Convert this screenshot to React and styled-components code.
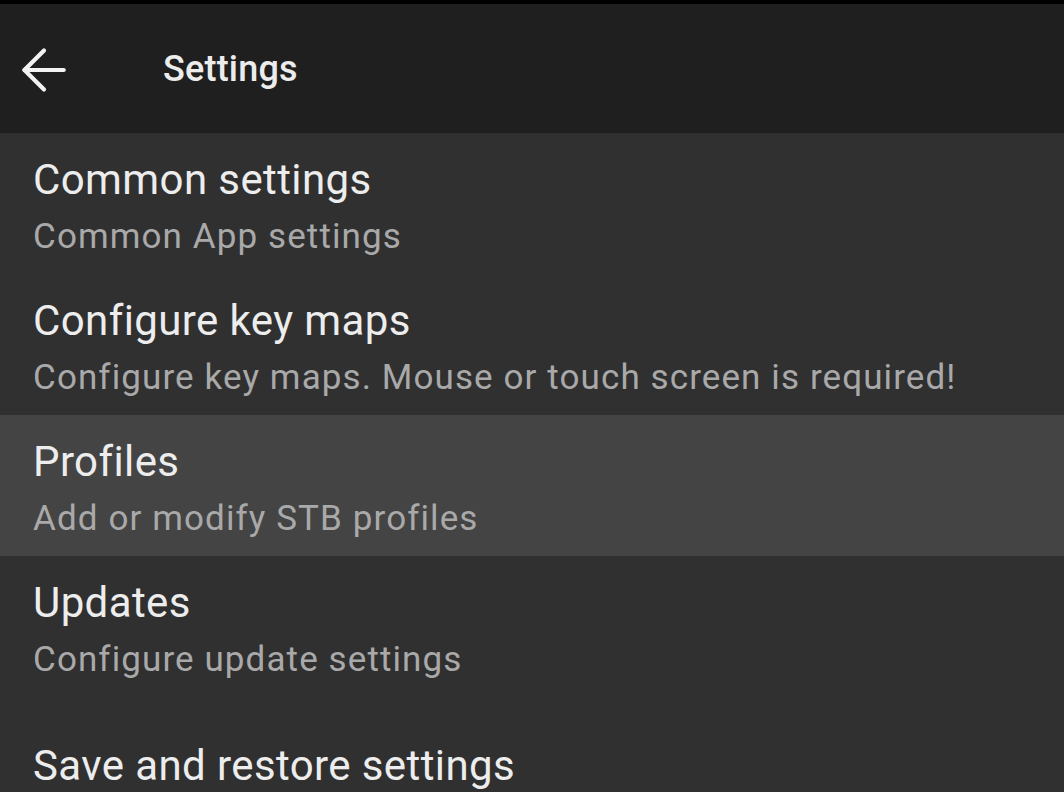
import { createGlobalStyle, styled } from 'styled-components';

const GlobalStyle = createGlobalStyle`
  html, body {
    margin: 0;
    padding: 0;
    background: #000;
  }
  body {
    font-family: Roboto, "Noto Sans", sans-serif;
    -webkit-font-smoothing: antialiased;
  }
`;

const Screen = styled.div`
  width: 1064px;
  height: 792px;
  overflow: hidden;
  background: #000;
  padding-top: 4px;
  box-sizing: border-box;
`;

const AppBar = styled.header`
  height: 129px;
  background: #1f1f1f;
  display: flex;
  align-items: center;
  padding-left: 21px;
`;

const BackButton = styled.button`
  width: 48px;
  height: 48px;
  padding: 0;
  border: none;
  background: transparent;
  color: #f2f2f2;
  display: flex;
  align-items: center;
  justify-content: flex-start;
  margin-right: 94px;
  margin-top: 2px;
`;

const Title = styled.h1`
  margin: 0;
  font-size: 36px;
  font-weight: 500;
  letter-spacing: 0.2px;
  color: #ececec;
`;

const List = styled.ul`
  list-style: none;
  margin: 0;
  padding: 0;
  background: #303031;
  height: 659px;
`;

const Item = styled.li`
  height: 141px;
  box-sizing: border-box;
  padding: 6px 33px 0;
  display: flex;
  flex-direction: column;
  justify-content: center;
  background: ${(p) => (p.$active ? '#444445' : 'transparent')};
`;

const ItemTitle = styled.div`
  font-size: 42px;
  line-height: 52px;
  letter-spacing: 0.4px;
  color: #ededed;

  &:only-child {
    margin-bottom: 9px;
  }
`;

const ItemSummary = styled.div`
  font-size: 35px;
  line-height: 44px;
  letter-spacing: 1.1px;
  color: #a9a9a9;
  margin-top: 9px;
`;

const items = [
  { title: 'Common settings', summary: 'Common App settings' },
  { title: 'Configure key maps', summary: 'Configure key maps. Mouse or touch screen is required!' },
  { title: 'Profiles', summary: 'Add or modify STB profiles', active: true },
  { title: 'Updates', summary: 'Configure update settings' },
  { title: 'Save and restore settings' },
];

const App = () => {
  return (
    <>
      <GlobalStyle />
      <Screen>
        <AppBar>
          <BackButton aria-label="Back">
            <svg width="46" height="46" viewBox="0 0 24 24" fill="none" stroke="currentColor" strokeWidth="2.2" strokeLinecap="round" strokeLinejoin="round">
              <path d="M22.3 12H1.8" />
              <path d="M12 1.8L1.8 12L12 22.2" />
            </svg>
          </BackButton>
          <Title>Settings</Title>
        </AppBar>
        <List>
          {items.map((item) => (
            <Item key={item.title} $active={item.active}>
              <ItemTitle>{item.title}</ItemTitle>
              {item.summary && <ItemSummary>{item.summary}</ItemSummary>}
            </Item>
          ))}
        </List>
      </Screen>
    </>
  );
};

export default App;
